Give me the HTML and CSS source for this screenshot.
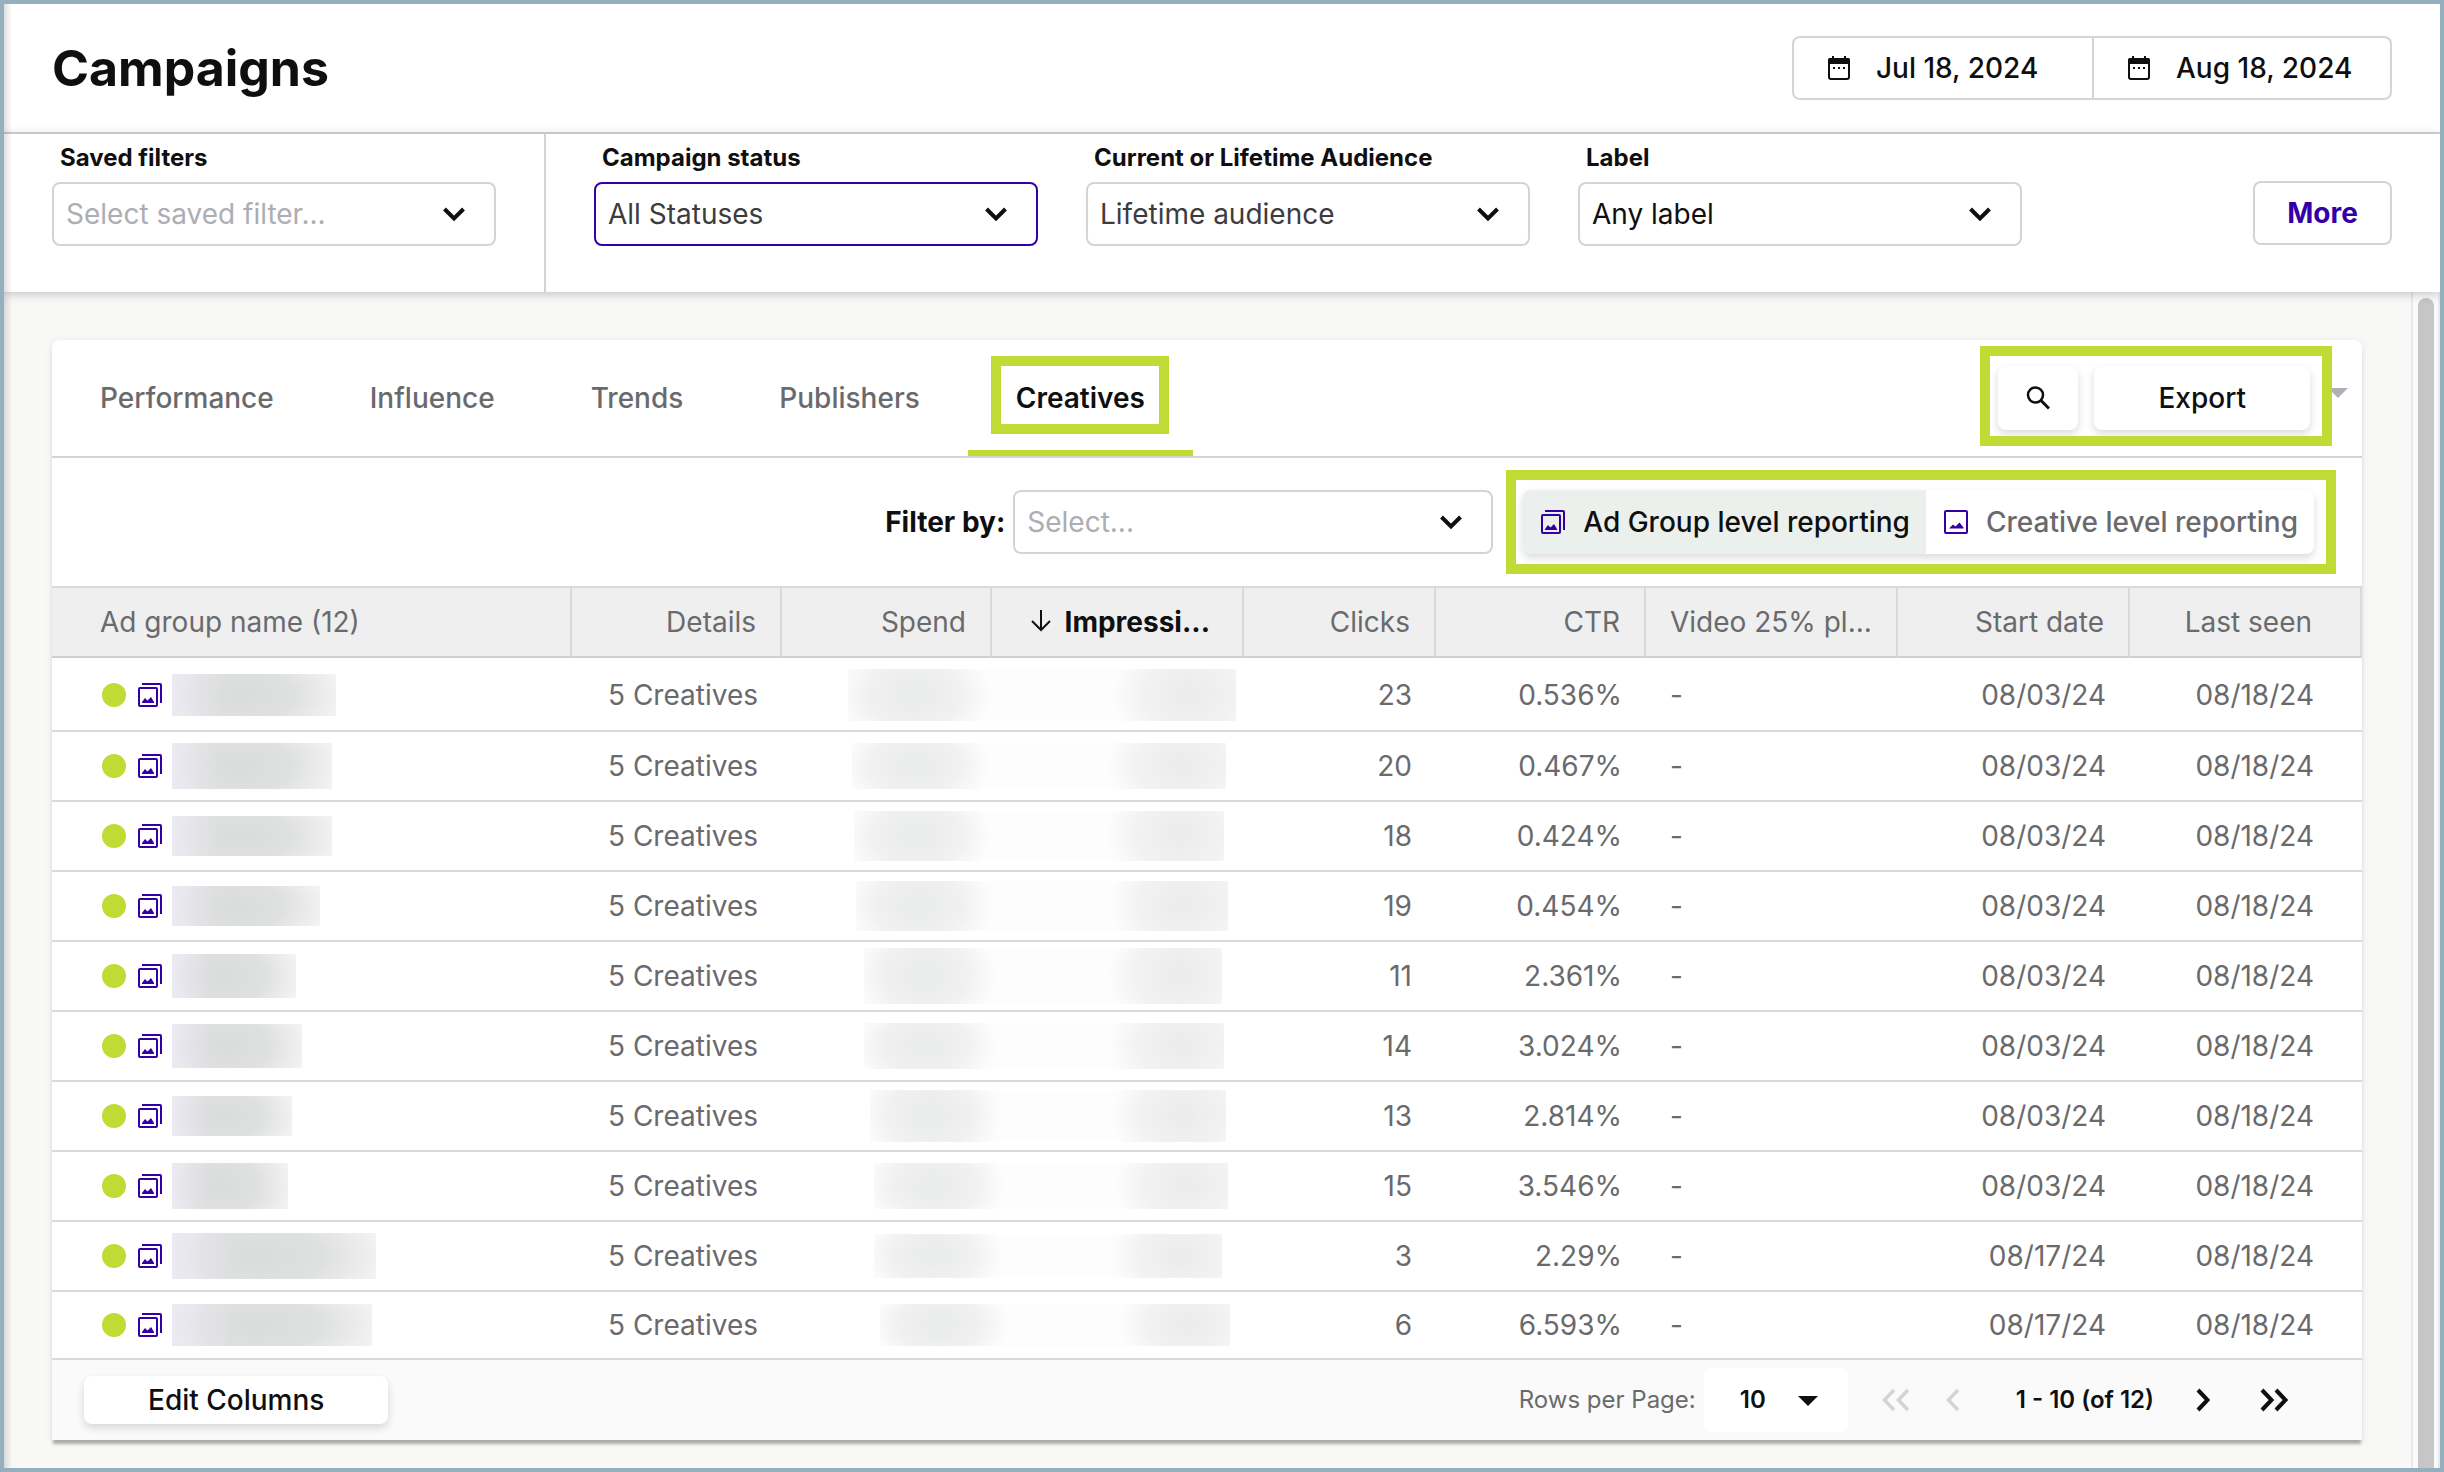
FILE: index.html
```html
<!DOCTYPE html>
<html lang="en">
<head>
<meta charset="utf-8">
<meta name="viewport" content="width=device-width, initial-scale=1">
<title>Campaigns</title>
<link rel="stylesheet" href="styles.css">
</head>
<body>
<svg class="sprite" aria-hidden="true">
  <symbol id="chevron-down" viewBox="0 0 24 16"><path d="M2.5 3l9.500 9.500L21.500 3" fill="none" stroke="currentColor" stroke-width="4"/></symbol>
  <symbol id="chevron-right" viewBox="0 0 14 24"><path d="M2 2l9.500 10L2 22" fill="none" stroke="currentColor" stroke-width="4"/></symbol>
  <symbol id="chevron-left" viewBox="0 0 14 24"><path d="M12 2L2.500 12l9.500 10" fill="none" stroke="currentColor" stroke-width="3.500"/></symbol>
  <symbol id="chevrons-right" viewBox="0 0 28 24"><path d="M2 2l9.500 10L2 22M16 2l9.500 10L16 22" fill="none" stroke="currentColor" stroke-width="4"/></symbol>
  <symbol id="chevrons-left" viewBox="0 0 28 24"><path d="M12 2L2.500 12l9.500 10M26 2L16.500 12l9.500 10" fill="none" stroke="currentColor" stroke-width="3.500"/></symbol>
  <symbol id="calendar" viewBox="0 0 22 24">
    <rect x="1" y="3" width="20" height="20" rx="2" fill="none" stroke="currentColor" stroke-width="2"/>
    <path d="M0 8V4q0-2 2-2h2V0h2v2h10V0h2v2h2q2 0 2 2v4zM5 11h2v2H5zM10 11h2v2h-2zM15 11h2v2h-2z" fill="currentColor"/>
  </symbol>
  <symbol id="group" viewBox="0 0 24 24">
    <path d="M4 1h18q1 0 1 1v18" fill="none" stroke="currentColor" stroke-width="2"/>
    <rect x="1" y="5" width="18" height="18" rx="1" fill="none" stroke="currentColor" stroke-width="2"/>
    <path d="M4 20v-1l3-4 2.500 2.500L13 14l3 5v1z" fill="currentColor"/>
  </symbol>
  <symbol id="picture" viewBox="0 0 24 24">
    <rect x="1" y="1" width="22" height="22" rx="1" fill="none" stroke="currentColor" stroke-width="2"/>
    <path d="M5 18.500l4-4 2.500 2 4-4 4 5v1z" fill="currentColor"/>
  </symbol>
  <symbol id="search" viewBox="0 0 24 24"><circle cx="9.500" cy="9" r="7.500" fill="none" stroke="currentColor" stroke-width="2.500"/><path d="M15 14.500l8 8" stroke="currentColor" stroke-width="3" fill="none"/></symbol>
  <symbol id="arrow-down" viewBox="0 0 22 22"><path d="M11 0v20M2 11l9 9 9-9" fill="none" stroke="currentColor" stroke-width="2"/></symbol>
  <symbol id="caret" viewBox="0 0 20 10"><path d="M0 0h20L10 10z" fill="currentColor"/></symbol>
</svg>

<header class="topbar">
  <h1 class="title">Campaigns</h1>
  <div class="dates">
    <button class="date" type="button"><svg class="date-icon"><use href="#calendar"/></svg>Jul 18, 2024</button>
    <button class="date" type="button"><svg class="date-icon"><use href="#calendar"/></svg>Aug 18, 2024</button>
  </div>
</header>

<section class="filters">
  <div class="saved">
    <div class="field">
      <label class="field-label" for="saved">Saved filters</label>
      <div class="pick"><select class="select select-empty" id="saved"><option>Select saved filter...</option></select><svg class="pick-icon"><use href="#chevron-down"/></svg></div>
    </div>
  </div>
  <div class="criteria">
    <div class="field">
      <label class="field-label" for="status">Campaign status</label>
      <div class="pick"><select class="select select-active" id="status"><option>All Statuses</option></select><svg class="pick-icon"><use href="#chevron-down"/></svg></div>
    </div>
    <div class="field">
      <label class="field-label" for="audience">Current or Lifetime Audience</label>
      <div class="pick"><select class="select" id="audience"><option>Lifetime audience</option></select><svg class="pick-icon"><use href="#chevron-down"/></svg></div>
    </div>
    <div class="field">
      <label class="field-label" for="label">Label</label>
      <div class="pick"><select class="select select-dark" id="label"><option>Any label</option></select><svg class="pick-icon"><use href="#chevron-down"/></svg></div>
    </div>
    <button class="more" type="button">More</button>
  </div>
</section>

<div class="viewport">
  <main class="content">
    <div class="card">
      <div class="tabbar">
        <nav class="tabs">
          <a class="tab" href="#performance">Performance</a>
          <a class="tab" href="#influence">Influence</a>
          <a class="tab" href="#trends">Trends</a>
          <a class="tab" href="#publishers">Publishers</a>
          <a class="tab tab-active" href="#creatives">Creatives<span class="mark mark-tab"></span></a>
        </nav>
        <div class="tools">
          <button class="raised search" type="button" aria-label="Search"><svg class="icon"><use href="#search"/></svg></button>
          <button class="raised" type="button">Export</button>
          <span class="mark mark-tools"></span>
        </div>
        <svg class="tab-caret" viewBox="0 0 20 20"><path d="M0 0h20L10 10z" fill="currentColor"/></svg>
      </div>

      <div class="controls">
        <label class="by-label" for="by">Filter by:</label>
        <div class="pick pick-by"><select class="select select-empty" id="by"><option>Select...</option></select><svg class="pick-icon"><use href="#chevron-down"/></svg></div>
        <div class="levels">
          <button class="level level-on" type="button"><svg class="icon violet"><use href="#group"/></svg>Ad Group level reporting</button>
          <button class="level" type="button"><svg class="icon violet"><use href="#picture"/></svg>Creative level reporting</button>
          <span class="mark mark-levels"></span>
        </div>
      </div>

      <table class="grid">
        <colgroup><col class="c-name"><col class="c-md"><col class="c-md"><col class="c-xl"><col class="c-sm"><col class="c-md"><col class="c-xl"><col class="c-lg"><col class="c-lg"></colgroup>
        <thead>
          <tr><th class="start">Ad group name (12)</th><th>Details</th><th>Spend</th><th class="sorted"><svg class="sort-icon"><use href="#arrow-down"/></svg>Impressi...</th><th>Clicks</th><th>CTR</th><th class="left">Video 25% pl...</th><th>Start date</th><th class="end">Last seen</th></tr>
        </thead>
        <tbody>
          <tr><td class="start"><div class="name"><i class="dot"></i><svg class="icon violet"><use href="#group"/></svg><i class="veil" style="width:164px;height:42px"></i></div></td><td>5 Creatives</td><td class="hidden" colspan="2"><i class="haze" style="width:388px;height:52px;margin-right:8px"></i></td><td>23</td><td>0.536%</td><td class="left">-</td><td>08/03/24</td><td class="end">08/18/24</td></tr>
          <tr><td class="start"><div class="name"><i class="dot"></i><svg class="icon violet"><use href="#group"/></svg><i class="veil" style="width:160px;height:46px"></i></div></td><td>5 Creatives</td><td class="hidden" colspan="2"><i class="haze" style="width:374px;height:46px;margin-right:18px"></i></td><td>20</td><td>0.467%</td><td class="left">-</td><td>08/03/24</td><td class="end">08/18/24</td></tr>
          <tr><td class="start"><div class="name"><i class="dot"></i><svg class="icon violet"><use href="#group"/></svg><i class="veil" style="width:160px;height:40px"></i></div></td><td>5 Creatives</td><td class="hidden" colspan="2"><i class="haze" style="width:370px;height:50px;margin-right:20px"></i></td><td>18</td><td>0.424%</td><td class="left">-</td><td>08/03/24</td><td class="end">08/18/24</td></tr>
          <tr><td class="start"><div class="name"><i class="dot"></i><svg class="icon violet"><use href="#group"/></svg><i class="veil" style="width:148px;height:40px"></i></div></td><td>5 Creatives</td><td class="hidden" colspan="2"><i class="haze" style="width:372px;height:50px;margin-right:16px"></i></td><td>19</td><td>0.454%</td><td class="left">-</td><td>08/03/24</td><td class="end">08/18/24</td></tr>
          <tr><td class="start"><div class="name"><i class="dot"></i><svg class="icon violet"><use href="#group"/></svg><i class="veil" style="width:124px;height:44px"></i></div></td><td>5 Creatives</td><td class="hidden" colspan="2"><i class="haze" style="width:358px;height:56px;margin-right:22px"></i></td><td>11</td><td>2.361%</td><td class="left">-</td><td>08/03/24</td><td class="end">08/18/24</td></tr>
          <tr><td class="start"><div class="name"><i class="dot"></i><svg class="icon violet"><use href="#group"/></svg><i class="veil" style="width:130px;height:44px"></i></div></td><td>5 Creatives</td><td class="hidden" colspan="2"><i class="haze" style="width:360px;height:46px;margin-right:20px"></i></td><td>14</td><td>3.024%</td><td class="left">-</td><td>08/03/24</td><td class="end">08/18/24</td></tr>
          <tr><td class="start"><div class="name"><i class="dot"></i><svg class="icon violet"><use href="#group"/></svg><i class="veil" style="width:120px;height:40px"></i></div></td><td>5 Creatives</td><td class="hidden" colspan="2"><i class="haze" style="width:356px;height:52px;margin-right:18px"></i></td><td>13</td><td>2.814%</td><td class="left">-</td><td>08/03/24</td><td class="end">08/18/24</td></tr>
          <tr><td class="start"><div class="name"><i class="dot"></i><svg class="icon violet"><use href="#group"/></svg><i class="veil" style="width:116px;height:46px"></i></div></td><td>5 Creatives</td><td class="hidden" colspan="2"><i class="haze" style="width:354px;height:46px;margin-right:16px"></i></td><td>15</td><td>3.546%</td><td class="left">-</td><td>08/03/24</td><td class="end">08/18/24</td></tr>
          <tr><td class="start"><div class="name"><i class="dot"></i><svg class="icon violet"><use href="#group"/></svg><i class="veil" style="width:204px;height:46px"></i></div></td><td>5 Creatives</td><td class="hidden" colspan="2"><i class="haze" style="width:348px;height:44px;margin-right:22px"></i></td><td>3</td><td>2.29%</td><td class="left">-</td><td>08/17/24</td><td class="end">08/18/24</td></tr>
          <tr><td class="start"><div class="name"><i class="dot"></i><svg class="icon violet"><use href="#group"/></svg><i class="veil" style="width:200px;height:42px"></i></div></td><td>5 Creatives</td><td class="hidden" colspan="2"><i class="haze" style="width:350px;height:42px;margin-right:14px"></i></td><td>6</td><td>6.593%</td><td class="left">-</td><td>08/17/24</td><td class="end">08/18/24</td></tr>
        </tbody>
      </table>

      <footer class="foot">
        <button class="raised edit" type="button">Edit Columns</button>
        <div class="pager">
          <label class="rows-label" for="rows">Rows per Page:</label>
          <div class="rows"><select class="rows-select" id="rows"><option>10</option></select><svg class="rows-caret"><use href="#caret"/></svg></div>
          <button class="page-btn" type="button" aria-label="First page" disabled><svg class="double"><use href="#chevrons-left"/></svg></button>
          <button class="page-btn" type="button" aria-label="Previous page" disabled><svg class="single"><use href="#chevron-left"/></svg></button>
          <span class="range">1 - 10 (of 12)</span>
          <button class="page-btn" type="button" aria-label="Next page"><svg class="single"><use href="#chevron-right"/></svg></button>
          <button class="page-btn page-last" type="button" aria-label="Last page"><svg class="double"><use href="#chevrons-right"/></svg></button>
        </div>
      </footer>
    </div>
  </main>
  <div class="track"><div class="thumb"></div></div>
</div>
</body>
</html>
```
FILE: styles.css
```css
:root {
  --ink: #0f0f10;
  --gray: #6a6a6d;
  --line: #d4d4d4;
  --rule: #d7dbdf;
  --lime: #c0db33;
  --violet: #3300a8;
}

* { box-sizing: border-box; }

body {
  position: relative;
  display: flex;
  flex-direction: column;
  margin: 0;
  min-height: 100vh;
  border: 4px solid #94b0be;
  background: #f8f8f6;
  color: var(--ink);
  font: 400 28px/36px Inter, "Liberation Sans", sans-serif;
}

/* soft shade along the left edge of the window */
body::before {
  content: "";
  position: absolute;
  z-index: 3;
  inset: 0 auto 0 0;
  width: 8px;
  background: linear-gradient(to right, rgba(0, 0, 0, .13), rgba(0, 0, 0, 0));
}

button, select { font: inherit; color: inherit; cursor: pointer; }
button { border: 0; padding: 0; background: none; }
svg { display: block; flex: none; }
.sprite { position: absolute; width: 0; height: 0; }
.icon { width: 24px; height: 24px; }
.violet { color: var(--violet); }

/* Top bar */
.topbar {
  display: flex;
  align-items: center;
  justify-content: space-between;
  height: 130px;
  padding: 0 48px;
  border-bottom: 2px solid var(--line);
  background: #fff;
}
.title { margin: 0; font-size: 50px; line-height: 60px; font-weight: 700; }
.dates { display: flex; border: 2px solid var(--line); border-radius: 8px; }
.date {
  display: flex;
  align-items: center;
  gap: 26px;
  width: 298px;
  height: 60px;
  padding-left: 34px;
  font-weight: 500;
}
.date + .date { border-left: 2px solid var(--line); }
.date-icon { width: 22px; height: 24px; }

/* Filter bar */
.filters {
  position: relative;
  z-index: 2;
  display: flex;
  height: 158px;
  background: #fff;
  box-shadow: 0 2px 10px rgba(0, 0, 0, .22);
}
.saved { padding: 9px 48px 0; border-right: 2px solid var(--line); }
.criteria { display: flex; flex: 1; gap: 48px; padding: 9px 48px 0; }
.field { flex: 0 1 444px; width: 444px; min-width: 0; }
.field-label { display: block; padding-left: 8px; margin-bottom: 9px; font-size: 24px; line-height: 30px; font-weight: 700; }
.pick { position: relative; }
.select {
  display: block;
  width: 100%;
  height: 64px;
  padding: 0 64px 0 12px;
  border: 2px solid var(--line);
  border-radius: 8px;
  background: #fff;
  color: #3c3c3e;
  appearance: none;
}
.select-empty { color: #adadb3; }
.select-active { border-color: var(--violet); }
.select-dark { color: var(--ink); }
.pick-icon { position: absolute; right: 30px; top: 24px; width: 24px; height: 16px; pointer-events: none; }
.more {
  width: 139px;
  height: 64px;
  margin: 38px 0 0 auto;
  border: 2px solid var(--line);
  border-radius: 8px;
  color: var(--violet);
  font-weight: 700;
}

/* Scrolling area */
.viewport { display: flex; flex: 1; }
.content { flex: 1; min-width: 0; padding: 48px 49px 28px 48px; }
.track { width: 29px; padding: 6px 4px 0 5px; border: solid #e8e8e8; border-width: 0 2px; background: #fafafa; display: flex; }
.thumb { flex: 1; border-radius: 8px 8px 0 0; background: #c6c6c6; }

.card {
  border-radius: 8px 8px 0 0;
  background: #fff;
  box-shadow: 0 5px 3px -1px rgba(0, 0, 0, .28), 0 2px 8px rgba(0, 0, 0, .08);
}

/* Annotation frames */
.mark { position: absolute; border: 10px solid var(--lime); pointer-events: none; }
.mark-tab { inset: 16px 24px 22px 23px; }
.mark-tools { inset: -20px -22px -16px -18px; }
.mark-levels { inset: -20px -22px -20px -17px; }

/* Tabs */
.tabbar { display: flex; align-items: center; height: 118px; padding-right: 14px; border-bottom: 2px solid var(--line); }
.tabs { display: flex; height: 100%; }
.tab {
  position: relative;
  display: flex;
  align-items: center;
  padding: 0 48px;
  color: var(--gray);
  font-weight: 500;
  text-decoration: none;
}
.tab-active { color: var(--ink); font-weight: 600; box-shadow: inset 0 -6px var(--lime); }
.tools { position: relative; display: flex; gap: 16px; margin-left: auto; z-index: 1; }
.raised {
  height: 64px;
  padding: 0 64px;
  border-radius: 8px;
  background: #fff;
  box-shadow: 0 4px 8px rgba(0, 0, 0, .14);
  font-weight: 500;
}
.search { display: grid; place-items: center; width: 80px; padding: 0; }
.tab-caret { width: 20px; height: 20px; margin-left: 18px; color: #aeb0b5; }

/* Filter and level switch */
.controls { display: flex; align-items: center; justify-content: flex-end; height: 128px; padding-right: 48px; }
.by-label { margin-right: 8px; font-weight: 700; }
.pick-by { width: 480px; margin-right: 30px; }
.levels { position: relative; display: flex; border-radius: 8px; box-shadow: 0 4px 8px rgba(0, 0, 0, .14); }
.level {
  display: flex;
  align-items: center;
  gap: 18px;
  height: 64px;
  padding: 0 16px 0 18px;
  color: var(--gray);
  font-weight: 500;
}
.level-on { border-radius: 8px 0 0 8px; background: #ebf0ec; color: var(--ink); }

/* Table */
.grid { width: 100%; table-layout: fixed; border-spacing: 0; color: var(--gray); }
.c-name { width: 520px; }
.c-sm { width: 192px; }
.c-md { width: 210px; }
.c-lg { width: 232px; }
.c-xl { width: 252px; }
th, td { height: 70px; padding: 0 24px; border-bottom: 2px solid var(--rule); text-align: right; white-space: nowrap; }
th {
  height: 72px;
  border: solid var(--rule);
  border-width: 2px 2px 2px 0;
  border-bottom-color: #cfcfcf;
  background: #efefef;
  font-weight: 400;
}
tbody tr:first-child td { height: 74px; padding-top: 2px; }
tbody tr:last-child td { height: 68px; }
.start { padding-left: 48px; text-align: left; }
.left { text-align: left; }
.end { padding-right: 48px; }
.sorted { padding-right: 32px; color: var(--ink); font-weight: 700; }
.sort-icon { display: inline-block; width: 22px; height: 22px; margin-right: 13px; }
.name { display: flex; align-items: center; }
.dot { width: 24px; height: 24px; margin: 0 12px 0 2px; border-radius: 50%; background: var(--lime); }
.veil {
  margin-left: 10px;
  background:
    linear-gradient(to right, rgba(236, 234, 244, .8), rgba(236, 234, 244, 0) 30%),
    radial-gradient(ellipse 65% 130% at 42% 50%, #dadcdc, #dfe0e0 50%, #f5f5f5);
}
.hidden { padding: 0; }
.haze {
  display: block;
  margin-left: auto;
  background:
    radial-gradient(ellipse 20% 110% at 17% 48%, #ebecec 20%, #f1f1f1 60%, rgba(252, 252, 252, 0)),
    radial-gradient(ellipse 20% 120% at 88% 48%, #ececec 10%, #f2f2f2 60%, rgba(252, 252, 252, 0)),
    #fdfdfd;
}

/* Footer */
.foot { display: flex; align-items: center; justify-content: space-between; height: 80px; padding: 0 56px 0 32px; background: #fafafa; font-size: 24px; }
.edit { height: 48px; font-size: 28px; }
.pager { display: flex; align-items: center; }
.rows-label { color: var(--gray); }
.rows { position: relative; margin: 0 16px 0 8px; }
.rows-select { display: block; width: 144px; height: 64px; padding: 0 36px; border: 0; border-radius: 8px; background: #fff; font-weight: 600; appearance: none; }
.rows-caret { position: absolute; right: 30px; top: 28px; width: 20px; height: 10px; pointer-events: none; }
.page-btn { padding: 20px 18px; }
.page-btn:disabled { color: #d4d4d4; }
.page-last { margin-left: 14px; }
.single { width: 14px; height: 24px; }
.double { width: 28px; height: 24px; }
.range { margin: 0 24px 0 38px; font-weight: 600; }
```
